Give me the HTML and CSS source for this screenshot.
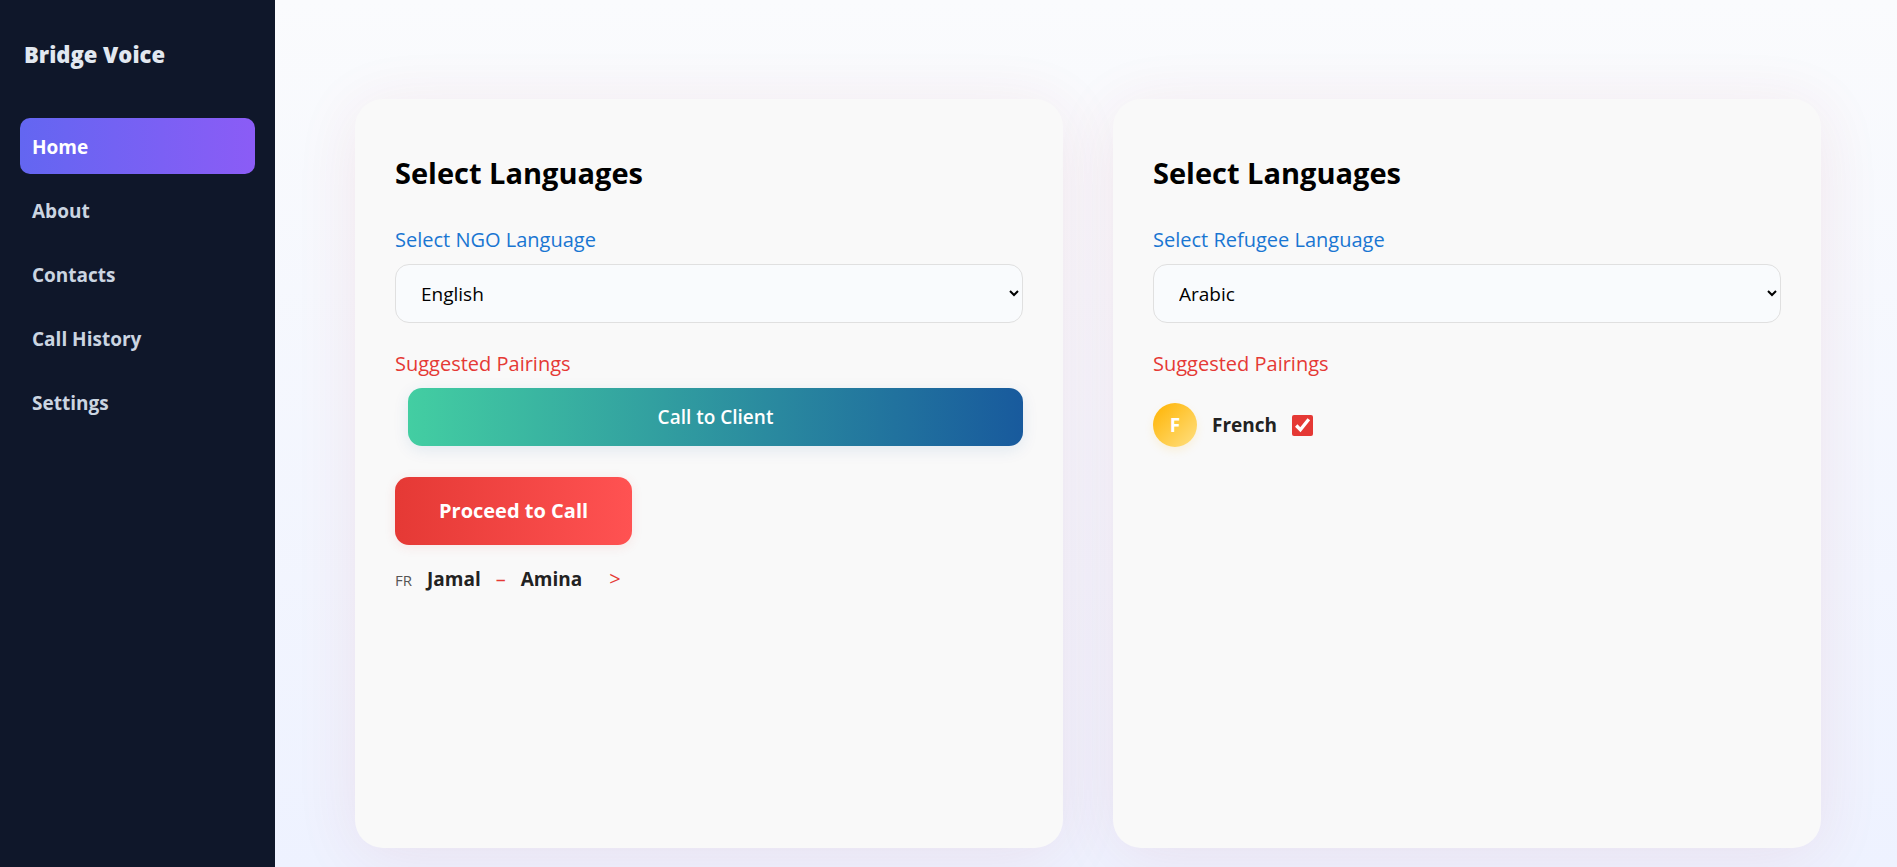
FILE: index.html
```html
<!DOCTYPE html>
<html lang="en">
<head>
<meta charset="utf-8">
<meta name="viewport" content="width=device-width, initial-scale=1">
<title>Bridge Voice</title>
<link rel="stylesheet" href="styles.css">
</head>
<body>
<aside class="sidebar">
  <div class="brand">Bridge Voice</div>
  <nav class="nav">
    <a class="nav-link active" href="#home">Home</a>
    <a class="nav-link" href="#about">About</a>
    <a class="nav-link" href="#contacts">Contacts</a>
    <a class="nav-link" href="#history">Call History</a>
    <a class="nav-link" href="#settings">Settings</a>
  </nav>
</aside>
<main class="main">
  <section class="card">
    <h2 class="card-title">Select Languages</h2>
    <label class="label" for="ngo">Select NGO Language</label>
    <select class="select" id="ngo"><option>English</option><option>French</option></select>
    <h3 class="subtitle">Suggested Pairings</h3>
    <button class="call" type="button">Call to Client</button>
    <button class="proceed" type="button">Proceed to Call</button>
    <div class="pair">
      <span class="code">FR</span>
      <span class="name">Jamal</span>
      <span class="dash">–</span>
      <span class="name">Amina</span>
      <span class="arrow">&gt;</span>
    </div>
  </section>
  <section class="card">
    <h2 class="card-title">Select Languages</h2>
    <label class="label" for="refugee">Select Refugee Language</label>
    <select class="select" id="refugee"><option>Arabic</option><option>French</option></select>
    <h3 class="subtitle">Suggested Pairings</h3>
    <div class="option">
      <span class="avatar">F</span>
      <label class="name" for="french">French</label>
      <input class="check" type="checkbox" id="french" checked>
    </div>
  </section>
</main>
</body>
</html>
```
FILE: styles.css
```css
* {
  box-sizing: border-box;
}

body {
  margin: 0;
  min-height: 100vh;
  display: flex;
  font-family: "Open Sans", "Noto Sans", sans-serif;
  font-size: 19px;
  line-height: 28px;
  color: #000;
  background: linear-gradient(180deg, #fafbfd, #eef2ff);
}

.sidebar {
  flex: 0 0 275px;
  padding: 40px 20px;
  background: #0f172a;
}

.brand {
  padding: 0 4px;
  margin-bottom: 50px;
  font-size: 22px;
  font-weight: 800;
  color: #e2e8f0;
}

.nav {
  display: flex;
  flex-direction: column;
  gap: 8px;
}

.nav-link {
  padding: 15px 12px 13px;
  border-radius: 10px;
  font-weight: 700;
  color: #cbd5e1;
  text-decoration: none;
}

.nav-link.active {
  color: #fff;
  background: linear-gradient(90deg, #6366f1, #8b5cf6);
}

.main {
  flex: 1;
  display: grid;
  grid-template-columns: 1fr 1fr;
  gap: 50px;
  padding: 99px 76px 19px 80px;
}

.card {
  display: flex;
  flex-direction: column;
  min-width: 0;
  padding: 52px 40px;
  border-radius: 28px;
  background: #f9f9f9;
  box-shadow: 0 8px 64px rgba(190, 40, 70, 0.09);
}

.card-title {
  margin: 0 0 31px;
  font-size: 29px;
  line-height: 44px;
  font-weight: 700;
}

.label {
  margin-bottom: 10px;
  font-size: 20px;
  font-weight: 500;
  color: #1976d2;
}

.select {
  height: 59px;
  margin-bottom: 27px;
  padding: 0 0 0 21px;
  border: 1px solid #e0e0e0;
  border-radius: 14px;
  font: inherit;
  color: #000;
  background: #f9fbfd;
}

.subtitle {
  margin: 0 0 10px;
  font-size: 20px;
  font-weight: 500;
  color: #e53935;
}

.call {
  height: 58px;
  margin: 0 0 31px 13px;
  border: 0;
  border-radius: 14px;
  font: inherit;
  font-weight: 600;
  color: #fff;
  background: linear-gradient(90deg, #43cea2, #185a9d);
  box-shadow: 0 4px 16px rgba(24, 90, 157, 0.1);
}

.proceed {
  align-self: flex-start;
  height: 68px;
  margin-bottom: 20px;
  padding: 0 44px;
  border: 0;
  border-radius: 14px;
  font: inherit;
  font-size: 20px;
  font-weight: 700;
  color: #fff;
  background: linear-gradient(90deg, #e53935, #ff5252);
  box-shadow: 0 2px 12px rgba(229, 57, 53, 0.1);
}

.pair {
  display: flex;
  align-items: baseline;
  gap: 15px;
}

.code {
  font-size: 15px;
  font-weight: 500;
  color: #555;
}

.name {
  font-weight: 700;
  color: #222;
}

.dash,
.arrow {
  font-size: 20px;
  color: #e53935;
}

.arrow {
  margin-left: 12px;
}

.option {
  display: flex;
  align-items: center;
  gap: 15px;
  padding-top: 15px;
}

.avatar {
  display: grid;
  place-items: center;
  width: 44px;
  height: 44px;
  border-radius: 50%;
  font-weight: 700;
  color: #fff;
  background: linear-gradient(135deg, #ffb300, #ffe082);
  box-shadow: 0 4px 10px rgba(255, 179, 0, 0.12);
}

.check {
  width: 21px;
  height: 21px;
  margin: 0;
  accent-color: #e53935;
}
```
